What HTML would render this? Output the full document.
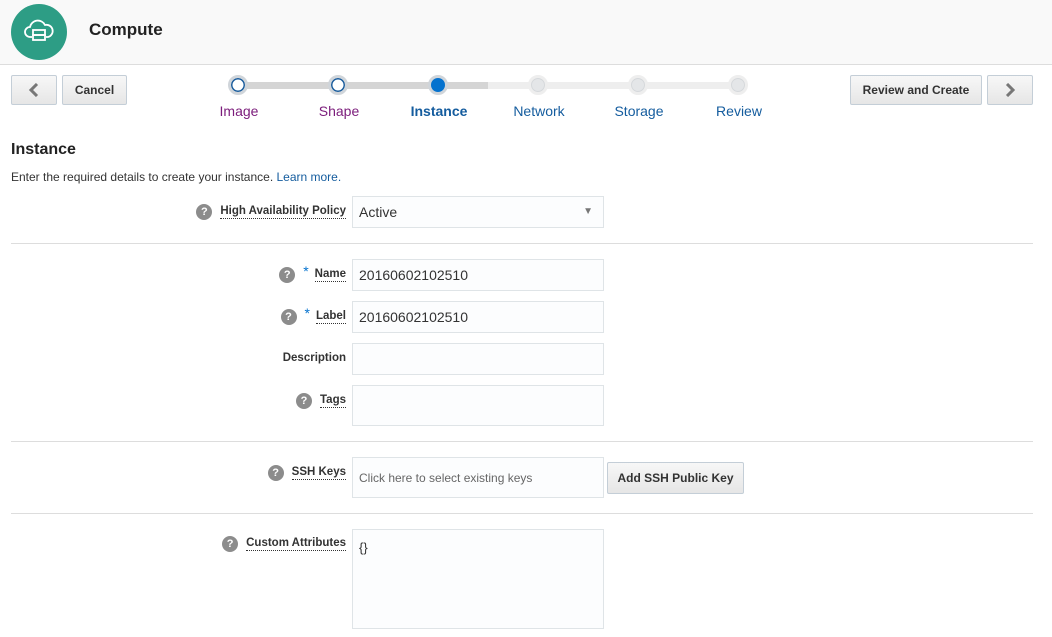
<!DOCTYPE html>
<html><head><style>
body{margin:0;width:1052px;height:637px;overflow:hidden;background:#fff;font-family:"Liberation Sans",Arial,sans-serif;position:relative;color:#333}
.a{position:absolute}
.hdr{left:0;top:0;width:1052px;height:64px;background:#f9f9f9;border-bottom:1px solid #ddd}
.btn{position:absolute;height:30px;border:1px solid #c4ced7;border-radius:2px;background:linear-gradient(#f7f7f7,#e6e6e6);font-size:12px;font-weight:bold;color:#333;display:flex;align-items:center;justify-content:center;box-sizing:border-box}
.row{position:absolute;right:706px;display:flex;align-items:center;height:16px}
.lbl{font-size:11.5px;font-weight:bold;color:#333;border-bottom:1px dotted #333;line-height:13px}
.q{width:16px;height:16px;border-radius:50%;background:#8c8c8c;color:#fff;font-size:11px;font-weight:bold;text-align:center;line-height:16px;margin-right:8px}
.inp{position:absolute;left:352px;width:252px;border:1px solid #dfe4e7;background:#fcfdfe;box-sizing:border-box;font-size:14px;color:#333;padding-left:6px}
.hr{position:absolute;left:11px;width:1022px;height:1px;background:#ddd}
.star{color:#0572ce;font-size:14px;margin-right:6px;position:relative;top:-4px}
.dot{position:absolute;top:75px;width:20px;height:20px;border-radius:50%;box-sizing:border-box}
.st{position:absolute;top:103px;font-size:14px;width:100px;text-align:center}
</style></head><body>
<div class="a hdr"></div>
<div class="a" style="left:11px;top:4px;width:56px;height:56px;border-radius:50%;background:#2d9d85"></div>
<svg class="a" style="left:22px;top:14px" width="34" height="34" viewBox="0 0 34 34" fill="none" stroke="#fff" stroke-width="1.8"><path d="M10 23H8a5 5 0 0 1 0-10 8 8 0 0 1 15-2 6 6 0 0 1 3 12h-2"/><rect x="11" y="16" width="12" height="5"/><rect x="11" y="21" width="12" height="5"/></svg>
<div class="a" style="left:89px;top:20px;font-size:17px;font-weight:bold;color:#222">Compute</div>
<div class="btn" style="left:11px;top:75px;width:46px"><svg width="12" height="14" viewBox="0 0 12 14"><path d="M9 1L3 7l6 6" stroke="#777" stroke-width="3" fill="none"/></svg></div>
<div class="btn" style="left:62px;top:75px;width:65px">Cancel</div>
<div class="btn" style="left:850px;top:75px;width:132px">Review and Create</div>
<div class="btn" style="left:987px;top:75px;width:46px"><svg width="12" height="14" viewBox="0 0 12 14"><path d="M3 1l6 6-6 6" stroke="#777" stroke-width="3" fill="none"/></svg></div>
<div class="a" style="left:238px;top:82px;width:250px;height:7px;background:#d5d5d5"></div>
<div class="a" style="left:488px;top:82px;width:250px;height:7px;background:#eee"></div>
<div class="dot" style="left:228px;border:3px solid #d0d5da;background:#fff;box-shadow:inset 0 0 0 1.5px #1a5c9c"></div>
<div class="dot" style="left:328px;border:3px solid #d0d5da;background:#fff;box-shadow:inset 0 0 0 1.5px #1a5c9c"></div>
<div class="dot" style="left:428px;border:3px solid #d0d5da;background:#0572ce"></div>
<div class="dot" style="left:528px;border:3px solid #eee;background:#e4e6e8;box-shadow:inset 0 0 0 1px #d5d8db"></div>
<div class="dot" style="left:628px;border:3px solid #eee;background:#e4e6e8;box-shadow:inset 0 0 0 1px #d5d8db"></div>
<div class="dot" style="left:728px;border:3px solid #eee;background:#e4e6e8;box-shadow:inset 0 0 0 1px #d5d8db"></div>
<div class="st" style="left:189px;color:#7b1c7b">Image</div>
<div class="st" style="left:289px;color:#7b1c7b">Shape</div>
<div class="st" style="left:389px;color:#145c9e;font-weight:bold">Instance</div>
<div class="st" style="left:489px;color:#145c9e">Network</div>
<div class="st" style="left:589px;color:#145c9e">Storage</div>
<div class="st" style="left:689px;color:#145c9e">Review</div>
<div class="a" style="left:11px;top:141px;font-size:16px;font-weight:bold;color:#222">Instance</div>
<div class="a" style="left:11px;top:170px;font-size:12px;color:#333">Enter the required details to create your instance. <span style="color:#145c9e">Learn more.</span></div>
<div class="row" style="top:204px"><div class="q">?</div><div class="lbl">High Availability Policy</div></div>
<div class="inp" style="top:196px;height:32px;line-height:30px">Active<span style="position:absolute;right:10px;top:0;color:#777;font-size:10px">&#9660;</span></div>
<div class="hr" style="top:243px"></div>
<div class="row" style="top:267px"><div class="q">?</div><span class="star">*</span><div class="lbl">Name</div></div>
<div class="inp" style="top:259px;height:32px;line-height:30px">20160602102510</div>
<div class="row" style="top:309px"><div class="q">?</div><span class="star">*</span><div class="lbl">Label</div></div>
<div class="inp" style="top:301px;height:32px;line-height:30px">20160602102510</div>
<div class="row" style="top:350px"><span style="font-size:11.5px;font-weight:bold">Description</span></div>
<div class="inp" style="top:343px;height:32px"></div>
<div class="row" style="top:393px"><div class="q">?</div><div class="lbl">Tags</div></div>
<div class="inp" style="top:385px;height:41px"></div>
<div class="hr" style="top:441px"></div>
<div class="row" style="top:465px"><div class="q">?</div><div class="lbl">SSH Keys</div></div>
<div class="inp" style="top:457px;width:252px;height:41px;line-height:40px;font-size:12px;color:#666">Click here to select existing keys</div>
<div class="btn" style="left:607px;top:462px;width:137px;height:32px">Add SSH Public Key</div>
<div class="hr" style="top:513px"></div>
<div class="row" style="top:536px"><div class="q">?</div><div class="lbl">Custom Attributes</div></div>
<div class="inp" style="top:529px;height:100px;padding-top:10px;font-size:13px">{}</div>
</body></html>
